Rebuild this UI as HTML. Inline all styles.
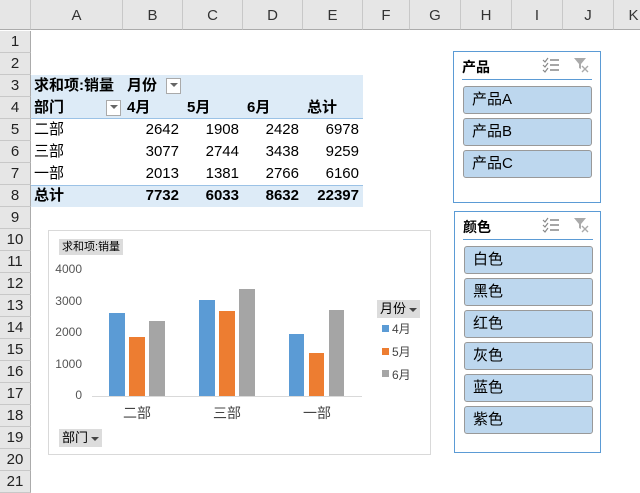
<!DOCTYPE html>
<html><head><meta charset="utf-8"><style>
body{margin:0;width:640px;height:480px;overflow:hidden;background:#fff;font-family:"Liberation Sans","Noto Sans CJK SC",sans-serif;position:relative}
.a{position:absolute}
.ch{position:absolute;top:0;height:30px;background:#e6e6e6;border-right:1px solid #c8c8c8;border-bottom:1px solid #ababab;font-size:15px;color:#333;text-align:center;line-height:31px;box-sizing:border-box}
.rh{position:absolute;left:0;width:31px;height:22px;background:#e6e6e6;border-bottom:1px solid #c8c8c8;border-right:1px solid #ababab;font-size:15px;color:#222;text-align:center;line-height:22px;box-sizing:border-box}
.t{position:absolute;font-size:15px;color:#000;line-height:22px;height:22px}
.n{text-align:right;width:56px}
.b{font-weight:bold}
.slc{position:absolute;border:1px solid #5b9bd5;background:#fff;box-sizing:border-box}
.it{position:absolute;left:9px;width:129px;height:28px;background:#bdd7ee;border:1px solid #999;border-radius:3px;box-sizing:border-box;font-size:15px;line-height:26px;padding-left:8px}
.btn{position:absolute;background:#dcdcdc;font-size:11px;line-height:16px;padding:0 3px}
.tri{display:inline-block;width:0;height:0;border-left:4px solid transparent;border-right:4px solid transparent;border-top:4px solid #444;vertical-align:middle;margin-left:3px}
.yl{position:absolute;font-size:12px;color:#555;text-align:right;width:42px;left:40px}
.bar{position:absolute;width:16px}
</style></head><body>
<div class="ch" style="left:0;width:31px"></div>
<div class="ch" style="left:31px;width:92px">A</div>
<div class="ch" style="left:123px;width:60px">B</div>
<div class="ch" style="left:183px;width:60px">C</div>
<div class="ch" style="left:243px;width:60px">D</div>
<div class="ch" style="left:303px;width:60px">E</div>
<div class="ch" style="left:363px;width:47px">F</div>
<div class="ch" style="left:410px;width:51px">G</div>
<div class="ch" style="left:461px;width:51px">H</div>
<div class="ch" style="left:512px;width:51px">I</div>
<div class="ch" style="left:563px;width:51px">J</div>
<div class="ch" style="left:614px;width:40px">K</div>
<div class="rh" style="top:31px">1</div><div class="rh" style="top:53px">2</div><div class="rh" style="top:75px">3</div><div class="rh" style="top:97px">4</div><div class="rh" style="top:119px">5</div><div class="rh" style="top:141px">6</div><div class="rh" style="top:163px">7</div><div class="rh" style="top:185px">8</div><div class="rh" style="top:207px">9</div><div class="rh" style="top:229px">10</div><div class="rh" style="top:251px">11</div><div class="rh" style="top:273px">12</div><div class="rh" style="top:295px">13</div><div class="rh" style="top:317px">14</div><div class="rh" style="top:339px">15</div><div class="rh" style="top:361px">16</div><div class="rh" style="top:383px">17</div><div class="rh" style="top:405px">18</div><div class="rh" style="top:427px">19</div><div class="rh" style="top:449px">20</div><div class="rh" style="top:471px">21</div>

<div class="a" style="left:31px;top:75px;width:332px;height:44px;background:#ddebf7;border-bottom:1px solid #9bc2e6;box-sizing:border-box"></div>
<div class="a" style="left:31px;top:185px;width:332px;height:22px;background:#ddebf7;border-top:1px solid #9bc2e6;box-sizing:border-box"></div>
<div class="t b" style="left:34px;top:75px">求和项:销量</div>
<div class="t b" style="left:127px;top:75px">月份</div>
<div class="a" style="left:166px;top:78px;width:15px;height:16px;border:1px solid #aaa;background:#fff;box-sizing:border-box;text-align:center;line-height:12px"><span class="tri" style="margin:0;border-top-color:#666"></span></div>
<div class="t b" style="left:34px;top:97px">部门</div>
<div class="a" style="left:106px;top:100px;width:15px;height:16px;border:1px solid #aaa;background:#fff;box-sizing:border-box;text-align:center;line-height:12px"><span class="tri" style="margin:0;border-top-color:#666"></span></div>
<div class="t b" style="left:127px;top:97px">4月</div>
<div class="t b" style="left:187px;top:97px">5月</div>
<div class="t b" style="left:247px;top:97px">6月</div>
<div class="t b" style="left:307px;top:97px">总计</div>

<div class="t" style="left:34px;top:119px">二部</div>
<div class="t n" style="left:123px;top:119px">2642</div><div class="t n" style="left:183px;top:119px">1908</div><div class="t n" style="left:243px;top:119px">2428</div><div class="t n" style="left:303px;top:119px">6978</div>
<div class="t" style="left:34px;top:141px">三部</div>
<div class="t n" style="left:123px;top:141px">3077</div><div class="t n" style="left:183px;top:141px">2744</div><div class="t n" style="left:243px;top:141px">3438</div><div class="t n" style="left:303px;top:141px">9259</div>
<div class="t" style="left:34px;top:163px">一部</div>
<div class="t n" style="left:123px;top:163px">2013</div><div class="t n" style="left:183px;top:163px">1381</div><div class="t n" style="left:243px;top:163px">2766</div><div class="t n" style="left:303px;top:163px">6160</div>
<div class="t b" style="left:34px;top:185px">总计</div>
<div class="t n b" style="left:123px;top:185px">7732</div><div class="t n b" style="left:183px;top:185px">6033</div><div class="t n b" style="left:243px;top:185px">8632</div><div class="t n b" style="left:303px;top:185px">22397</div>

<!-- chart -->
<div class="a" style="left:48px;top:230px;width:383px;height:225px;border:1px solid #d9d9d9;box-sizing:border-box;background:#fff"></div>
<div class="btn" style="left:59px;top:239px">求和项:销量</div>
<div class="yl" style="top:262px">4000</div>
<div class="yl" style="top:294px">3000</div>
<div class="yl" style="top:325px">2000</div>
<div class="yl" style="top:357px">1000</div>
<div class="yl" style="top:388px">0</div>
<div class="a" style="left:92px;top:396px;width:270px;height:1px;background:#d9d9d9"></div>
<div class="bar" style="left:109px;top:313px;height:83px;background:#5b9bd5"></div>
<div class="bar" style="left:129px;top:337px;height:59px;background:#ed7d31"></div>
<div class="bar" style="left:149px;top:321px;height:75px;background:#a5a5a5"></div>
<div class="bar" style="left:199px;top:300px;height:96px;background:#5b9bd5"></div>
<div class="bar" style="left:219px;top:311px;height:85px;background:#ed7d31"></div>
<div class="bar" style="left:239px;top:289px;height:107px;background:#a5a5a5"></div>
<div class="bar" style="left:289px;top:334px;height:62px;background:#5b9bd5;width:15px"></div>
<div class="bar" style="left:309px;top:353px;height:43px;background:#ed7d31;width:15px"></div>
<div class="bar" style="left:329px;top:310px;height:86px;background:#a5a5a5;width:15px"></div>
<div class="a" style="left:123px;top:403px;font-size:14px;color:#444">二部</div>
<div class="a" style="left:213px;top:403px;font-size:14px;color:#444">三部</div>
<div class="a" style="left:303px;top:403px;font-size:14px;color:#444">一部</div>
<div class="btn" style="left:377px;top:300px;height:18px;font-size:13px;line-height:18px">月份<span class="tri"></span></div>
<div class="a" style="left:382px;top:325px;width:7px;height:7px;background:#5b9bd5"></div>
<div class="a" style="left:392px;top:320px;font-size:12px;color:#444">4月</div>
<div class="a" style="left:382px;top:348px;width:7px;height:7px;background:#ed7d31"></div>
<div class="a" style="left:392px;top:343px;font-size:12px;color:#444">5月</div>
<div class="a" style="left:382px;top:370px;width:7px;height:7px;background:#a5a5a5"></div>
<div class="a" style="left:392px;top:366px;font-size:12px;color:#444">6月</div>
<div class="btn" style="left:59px;top:429px;height:18px;font-size:13px;line-height:18px">部门<span class="tri"></span></div>

<!-- slicers -->
<div class="slc" style="left:453px;top:51px;width:148px;height:152px">
 <div class="a b" style="left:8px;top:5px;font-size:14px">产品</div>
 <svg class="a" style="left:88px;top:5px" width="18" height="16"><path d="M1 3l2 2 3-4M1 8l2 2 3-4M1 13l2 2 3-4" stroke="#888" fill="none" stroke-width="1.2"/><path d="M8 3h9M8 8h9M8 13h9" stroke="#888" stroke-width="1.4"/></svg>
 <svg class="a" style="left:120px;top:5px" width="17" height="16"><path d="M0 1h12l-5 6v5l-2-1V7z" fill="#aaa"/><path d="M8 9l6 6M14 9l-6 6" stroke="#aaa" stroke-width="1.4"/></svg>
 <div class="a" style="left:8px;top:27px;width:130px;height:1px;background:#5b9bd5"></div>
 <div class="it" style="top:34px">产品A</div>
 <div class="it" style="top:66px">产品B</div>
 <div class="it" style="top:98px">产品C</div>
</div>
<div class="slc" style="left:454px;top:211px;width:147px;height:242px">
 <div class="a b" style="left:8px;top:5px;font-size:14px">颜色</div>
 <svg class="a" style="left:87px;top:5px" width="18" height="16"><path d="M1 3l2 2 3-4M1 8l2 2 3-4M1 13l2 2 3-4" stroke="#888" fill="none" stroke-width="1.2"/><path d="M8 3h9M8 8h9M8 13h9" stroke="#888" stroke-width="1.4"/></svg>
 <svg class="a" style="left:119px;top:5px" width="17" height="16"><path d="M0 1h12l-5 6v5l-2-1V7z" fill="#aaa"/><path d="M8 9l6 6M14 9l-6 6" stroke="#aaa" stroke-width="1.4"/></svg>
 <div class="a" style="left:8px;top:27px;width:130px;height:1px;background:#5b9bd5"></div>
 <div class="it" style="top:34px">白色</div>
 <div class="it" style="top:66px">黑色</div>
 <div class="it" style="top:98px">红色</div>
 <div class="it" style="top:130px">灰色</div>
 <div class="it" style="top:162px">蓝色</div>
 <div class="it" style="top:194px">紫色</div>
</div>
</body></html>
